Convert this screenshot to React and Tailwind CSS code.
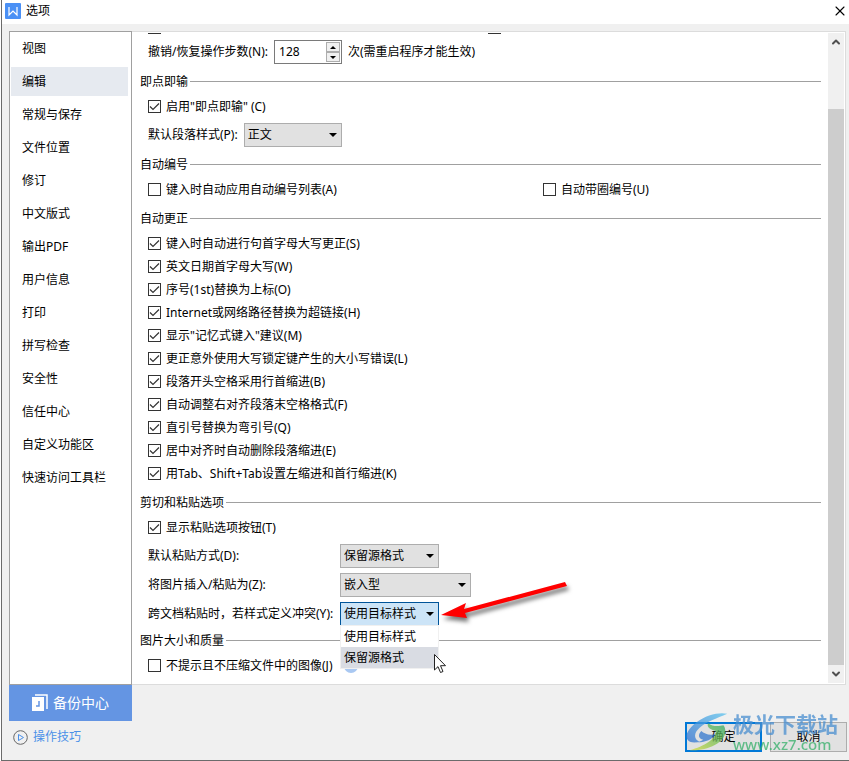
import { ChevronUp, ChevronDown, X } from "lucide-react";

const NAV = ["视图", "编辑", "常规与保存", "文件位置", "修订", "中文版式", "输出PDF", "用户信息", "打印", "拼写检查", "安全性", "信任中心", "自定义功能区", "快速访问工具栏"];

const CORRECTIONS = [
  "键入时自动进行句首字母大写更正(S)",
  "英文日期首字母大写(W)",
  "序号(1st)替换为上标(O)",
  "Internet或网络路径替换为超链接(H)",
  "显示\"记忆式键入\"建议(M)",
  "更正意外使用大写锁定键产生的大小写错误(L)",
  "段落开头空格采用行首缩进(B)",
  "自动调整右对齐段落末空格格式(F)",
  "直引号替换为弯引号(Q)",
  "居中对齐时自动删除段落缩进(E)",
  "用Tab、Shift+Tab设置左缩进和首行缩进(K)",
];

function Box({ checked }) {
  return (
    <span className="relative flex size-[13px] shrink-0">
      <input type="checkbox" defaultChecked={checked} className="peer size-[13px] appearance-none border border-[#333] bg-white" />
      <svg viewBox="0 0 13 13" className="pointer-events-none absolute inset-0 hidden peer-checked:block" fill="none" stroke="#333" strokeWidth="1.2">
        <path d="M2 6.500 L5 9.500 L11 3.500" />
      </svg>
    </span>
  );
}

function Check({ label, checked }) {
  return (
    <label className="flex h-[23px] items-center gap-[5px]">
      <Box checked={checked} />
      <span className="whitespace-nowrap">{label}</span>
    </label>
  );
}

function Section({ title, children }) {
  return (
    <section>
      <h2 className="flex h-[19px] items-center gap-0.5">
        <span>{title}</span>
        <span className="h-px flex-1 bg-[#a0a0a0]" />
      </h2>
      <div className="flex flex-col pt-1 pl-2">{children}</div>
    </section>
  );
}

function Select({ id, options, width, active }) {
  return (
    <span className={`relative flex ${width}`}>
      <select
        id={id}
        className={`h-6 w-full appearance-none border pl-[3px] ${active ? "border-[#005499] bg-[#cce4f7]" : "border-[#adadad] bg-[#e1e1e1]"}`}
      >
        {options.map((o) => (
          <option key={o}>{o}</option>
        ))}
      </select>
      <svg viewBox="0 0 8 4" className="pointer-events-none absolute top-[10px] right-[5px] h-1 w-2">
        <path d="M0 0H8L4 4Z" />
      </svg>
    </span>
  );
}

function Watermark() {
  return (
    <div className="pointer-events-none absolute right-[11px] bottom-2 flex items-end opacity-75">
      <svg viewBox="0 0 50 42" className="h-[42px] w-[48px]">
        <defs>
          <linearGradient id="wb" x1="0" y1="1" x2="1" y2="0">
            <stop offset="0" stopColor="#2f6fd0" />
            <stop offset="1" stopColor="#5cc4ee" />
          </linearGradient>
          <linearGradient id="wg" x1="0" y1="1" x2="1" y2="0">
            <stop offset="0" stopColor="#d6dc3a" />
            <stop offset="1" stopColor="#2aa866" />
          </linearGradient>
        </defs>
        <path fill="url(#wb)" d="M44 3C36 1 22 4 12 12 4 18 0 25 2 29c2 4 8 5 13 3-6-2-6-9 0-14C22 11 33 8 44 3Z" />
        <path fill="#3478cf" d="M8 32c9 2 20-1 24-8-6 2-12 0-15-3-4 4-3 8 2 9-3 2-7 3-11 2Z" />
        <path fill="url(#wg)" d="M24 13c-2 5 4 7 8 8 1 8-12 16-27 20 17 1 37-7 37-20 0-3-1-5-2-6-4 1-11 2-16-2Z" />
      </svg>
      <div>
        <div className="text-[21px] leading-6 font-bold text-[#4a8fd0]">极光下载站</div>
        <div className="text-[15px] leading-4 font-medium text-[#35b06a]">www.xz7.com</div>
      </div>
    </div>
  );
}

export default function App() {
  return (
    <div className="flex min-h-screen flex-col bg-white pl-px font-['Noto_Sans','Noto_Sans_CJK_SC',sans-serif] text-[12px] leading-4 text-black">
      <div className="relative flex flex-1 flex-col border-b border-l border-[#6b6b6b] bg-[#f0f0f0]">
        <header className="flex h-6 items-start bg-white pt-[3px] pl-[3px]">
          <svg viewBox="0 0 16 16" className="size-4">
            <rect width="16" height="16" rx="1" fill="#4a90f5" />
            <path d="M4 4v8l4-4 4 4V4" fill="none" stroke="#fff" strokeWidth="1.2" />
          </svg>
          <h1 className="ml-[5px] flex-1">选项</h1>
          <button aria-label="关闭" className="mr-px">
            <X className="size-4" strokeWidth={1.6} />
          </button>
        </header>

        <main className="flex pt-[7px] pr-[3px] pl-[7px]">
          <aside className="flex w-[123px] shrink-0 flex-col">
            <nav className="flex-1 border border-[#a0a0a0] bg-white pr-[3px] pl-px">
              {NAV.map((n) => (
                <button key={n} className={`flex h-[33px] w-full items-center pl-[11px] ${n === "编辑" ? "border-y-2 border-white bg-[#e6eaf0]" : ""}`}>
                  {n}
                </button>
              ))}
            </nav>
            <button className="flex h-9 items-center gap-[5px] bg-[#6495e3] pl-[23px] text-[14px] text-white">
              <svg viewBox="0 0 16 18" className="h-[18px] w-4">
                <path d="M3 1H15V15" fill="none" stroke="#fff" strokeWidth="1.5" />
                <path d="M0 3H12V17H0Z" fill="#fff" />
                <path d="M7 7V12H4" fill="none" stroke="#6495e3" strokeWidth="1.5" />
              </svg>
              备份中心
            </button>
          </aside>

          <div className="mb-9 flex min-w-0 flex-1 border border-l-0 border-[#dcdcdc] bg-white">
            <div className="min-w-0 flex-1 pr-[7px] pb-[7px] pl-2">
              <div className="grid h-2 grid-cols-[340px_1fr] items-start pt-px pl-2">
                <span className="h-px w-[13px] bg-[#333]" />
                <span className="h-px w-[13px] bg-[#333]" />
              </div>
              <div className="flex h-6 items-center pl-2">
                <label htmlFor="undo">撤销/恢复操作步数(N):</label>
                <div className="mx-[6px] flex h-6 w-[68px] border border-[#7a7a7a] p-px">
                  <input id="undo" defaultValue="128" className="w-0 flex-1 pl-[3px] outline-none" />
                  <div className="flex w-[14px] flex-col">
                    <button aria-label="增加" className="flex flex-1 items-center justify-center border border-[#adadad] bg-[#f0f0f0]">
                      <svg viewBox="0 0 6 3" className="h-[3px] w-1.5"><path d="M0 3L3 0L6 3Z" /></svg>
                    </button>
                    <button aria-label="减少" className="flex flex-1 items-center justify-center border border-[#adadad] bg-[#f0f0f0]">
                      <svg viewBox="0 0 6 3" className="h-[3px] w-1.5"><path d="M0 0H6L3 3Z" /></svg>
                    </button>
                  </div>
                </div>
                <span>次(需重启程序才能生效)</span>
              </div>
              <div className="mt-2 flex flex-col gap-2">
                <Section title="即点即输">
                  <Check checked label={'启用"即点即输" (C)'} />
                  <div className="mt-[5px] flex items-center gap-[6px]">
                    <label htmlFor="para">默认段落样式(P):</label>
                    <Select id="para" options={["正文"]} width="w-[98px]" />
                  </div>
                </Section>
                <Section title="自动编号">
                  <div className="grid grid-cols-[395px_1fr]">
                    <Check label="键入时自动应用自动编号列表(A)" />
                    <Check label="自动带圈编号(U)" />
                  </div>
                </Section>
                <Section title="自动更正">
                  {CORRECTIONS.map((c) => (
                    <Check key={c} checked label={c} />
                  ))}
                </Section>
                <div className="flex flex-col gap-[5px]">
                  <Section title="剪切和粘贴选项">
                    <Check checked label="显示粘贴选项按钮(T)" />
                    <div className="mt-[5px] grid grid-cols-[192px_1fr] items-center gap-y-[5px]">
                      <label htmlFor="paste">默认粘贴方式(D):</label>
                      <Select id="paste" options={["保留源格式"]} width="w-[99px]" />
                      <label htmlFor="pic">将图片插入/粘贴为(Z):</label>
                      <Select id="pic" options={["嵌入型"]} width="w-[131px]" />
                      <label htmlFor="cross" className="whitespace-nowrap">跨文档粘贴时，若样式定义冲突(Y):</label>
                      <div className="relative">
                        <Select id="cross" active options={["使用目标样式"]} width="w-[99px]" />
                        <ul className="absolute top-[23px] left-0 z-10 w-[99px] border border-[#f0f0f0] bg-white">
                          <li className="flex h-[21px] items-center pl-[3px]">使用目标样式</li>
                          <li className="flex h-[21px] items-center bg-[#d9dce3] pl-[3px]">保留源格式</li>
                        </ul>
                        <svg viewBox="0 0 140 50" className="pointer-events-none absolute -top-[23px] left-[98px] z-10 h-[50px] w-[140px]">
                          <path d="M3 36L28 24L26 30L127 3L129 7L27 34L29 39Z" fill="#f00" className="drop-shadow-[2px_4px_2px_#0008]" />
                        </svg>
                        <svg viewBox="0 0 12 20" className="pointer-events-none absolute top-[52px] left-[94px] z-20 h-5 w-3">
                          <path d="M.5.5V16L4 12.600L6.500 18.500L9 17.500L6.500 11.700H11.500Z" fill="#fff" stroke="#222" />
                        </svg>
                      </div>
                    </div>
                  </Section>
                  <Section title="图片大小和质量">
                    <div className="flex items-center">
                      <Check label="不提示且不压缩文件中的图像(J)" />
                      <span className="ml-3 size-[14px] rounded-full bg-[#a9c8f2]" />
                    </div>
                  </Section>
                </div>
              </div>
            </div>
            <div className="my-px mr-px flex w-4 flex-col bg-[#f0f0f0]">
              <button aria-label="向上滚动" className="flex h-[18px] items-center justify-center"><ChevronUp className="size-3" color="#505050" strokeWidth={4} /></button>
              <div className="flex-1 pt-[58px]"><div className="h-full bg-[#cdcdcd]" /></div>
              <button aria-label="向下滚动" className="flex h-[18px] items-center justify-center"><ChevronDown className="size-3" color="#505050" strokeWidth={4} /></button>
            </div>
          </div>
        </main>

        <footer className="flex items-start pr-0.5 pl-[11px]">
          <a href="#tips" className="mt-2 flex items-center gap-[5px] text-[#4a90e8]">
            <svg viewBox="0 0 15 15" className="size-[15px]" fill="none">
              <circle cx="7.500" cy="7.500" r="6.800" stroke="#666" />
              <path d="M5.500 4.500V10.500L10.500 7.500Z" stroke="#4a90e8" />
            </svg>
            操作技巧
          </a>
          <div className="mt-px ml-auto flex gap-2">
            <button className="h-[30px] w-[77px] border-2 border-[#0078d7] bg-[#e1e1e1]">确定</button>
            <button className="h-[30px] w-[77px] border border-[#adadad] bg-[#e1e1e1]">取消</button>
          </div>
        </footer>
        <Watermark />
      </div>
    </div>
  );
}
